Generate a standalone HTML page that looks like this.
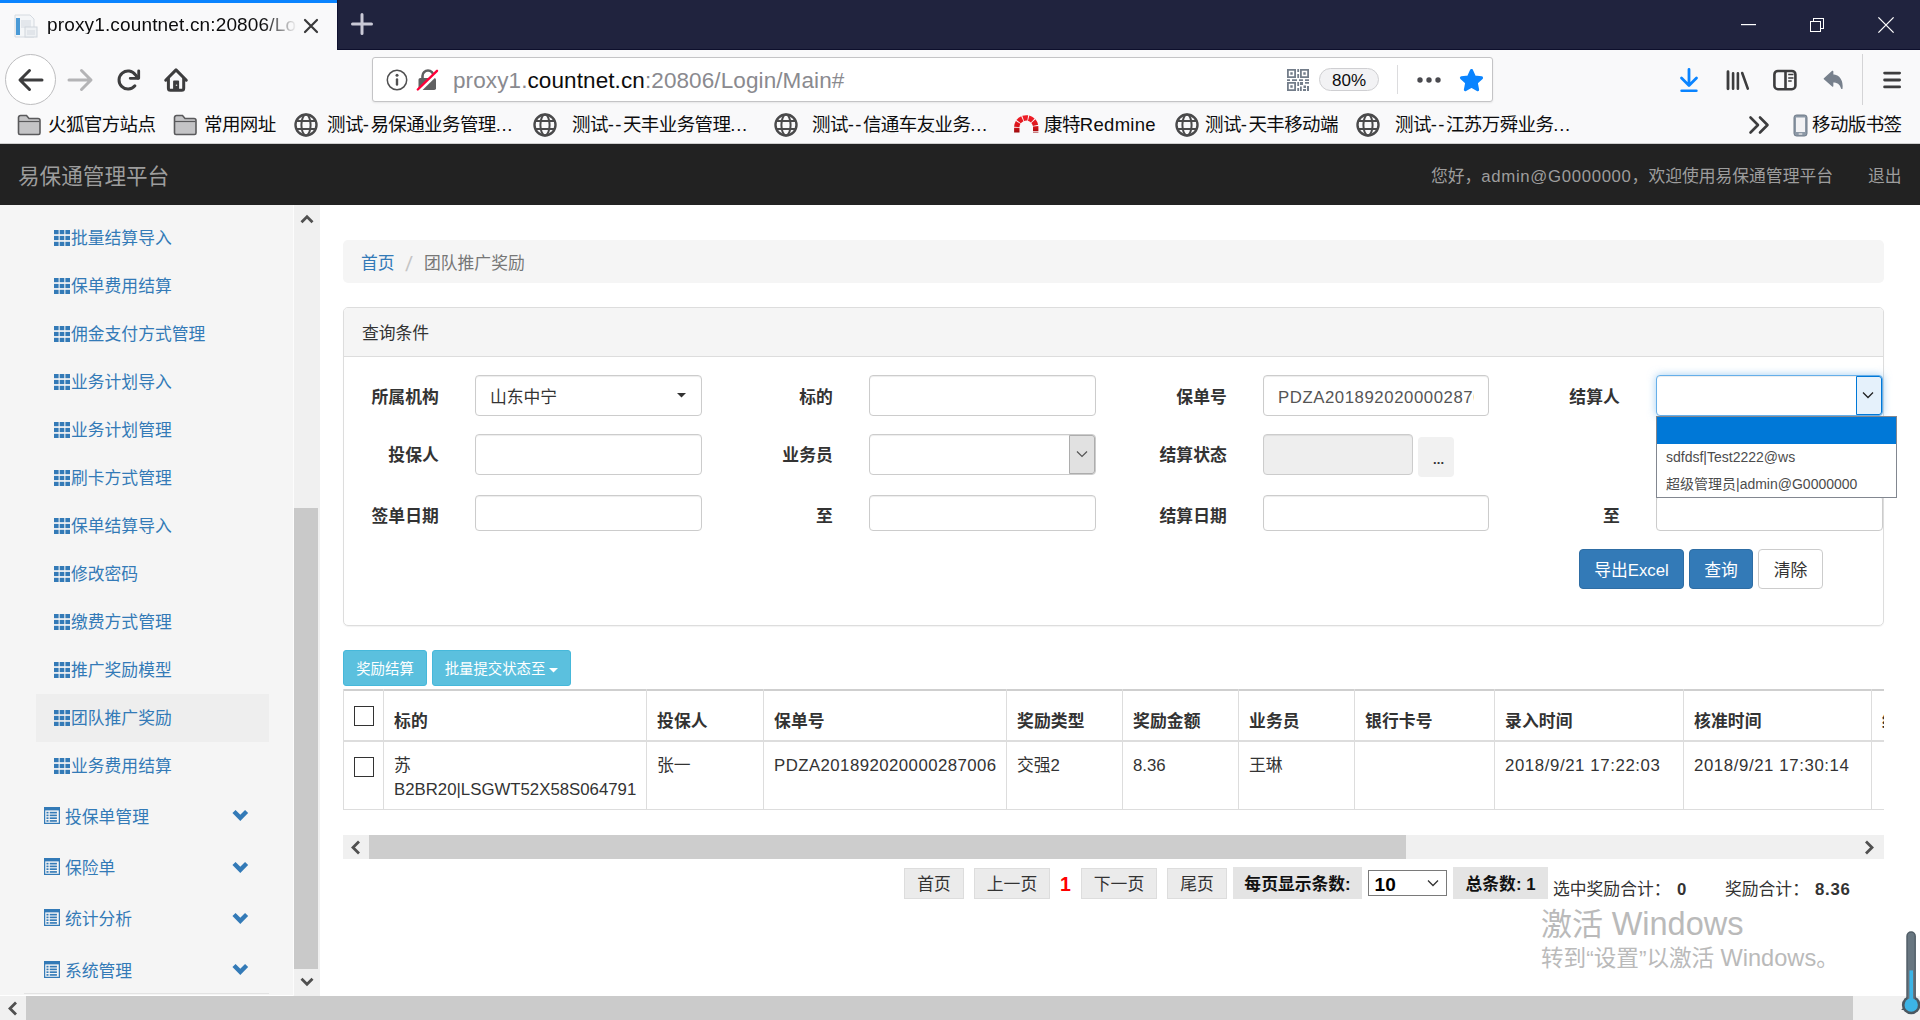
<!DOCTYPE html>
<html lang="zh-CN">
<head>
<meta charset="utf-8">
<title>易保通管理平台</title>
<style>
*{box-sizing:border-box;margin:0;padding:0}
html,body{width:1920px;height:1020px;overflow:hidden;background:#fff}
body{position:relative;font-family:"Liberation Sans","Noto Sans CJK SC",sans-serif;color:#333;font-size:16px}
.abs{position:absolute}
.t{position:absolute;white-space:nowrap;line-height:1;margin-top:2px}
svg{position:absolute;overflow:visible}
#titlebar{left:0;top:0;width:1920px;height:50px;background:#20233e}
#tab{left:0;top:0;width:337px;height:50px;background:#f9f9fa;border-top:3px solid #0a84ff}
#navbar{left:0;top:50px;width:1920px;height:60px;background:#f9f9fa}
#bmbar{left:0;top:110px;width:1920px;height:34px;background:#f9f9fa;border-bottom:1px solid #cfcfcf}
#urlbar{left:372px;top:57px;width:1121px;height:45px;background:#fff;border:1px solid #c4c4c6;border-radius:3px;box-shadow:0 1px 2px rgba(0,0,0,.08)}
.bm{font-size:18.500px;color:#0c0c0d;top:113.500px;letter-spacing:-0.6px}
#apphead{left:0;top:144px;width:1920px;height:61px;background:#222}
#side{left:0;top:205px;width:295px;height:790px;background:#f5f5f5}
.mi{font-size:16.800px;color:#337ab7;left:71px;letter-spacing:0}
.mg{font-size:16.800px;color:#337ab7;left:65px;letter-spacing:0}
.f{font-size:16.800px;letter-spacing:0}
.lb{font-size:16.800px;font-weight:bold;color:#333;letter-spacing:0.1px}
.in{background:#fff;border:1px solid #ccc;border-radius:4px;box-shadow:inset 0 1px 1px rgba(0,0,0,.075)}
.dd{font-size:14px;color:#4c4c4c}
.btn{border-radius:4px;font-size:16.800px;text-align:center;line-height:41px;white-space:nowrap;letter-spacing:0}
.btn.sm{font-size:14.400px;line-height:36px;border-radius:3px;letter-spacing:0}
.cb{width:20px;height:20px;background:#fff;border:1px solid #333}
.pg{background:#ebebeb;border:1px solid #ddd;font-size:16.800px;color:#333;text-align:center;line-height:32px;white-space:nowrap}
.pgl{background:#e4e4e4;font-size:16.800px;font-weight:bold;color:#111;text-align:center;line-height:35px;white-space:nowrap;letter-spacing:0}
</style>
</head>
<body>
<div id="titlebar" class="abs"></div><div class="abs" style="left:337px;top:49px;width:1583px;height:1px;background:#0d0f2c"></div><div class="abs" style="left:337px;top:0;width:1px;height:50px;background:#101231"></div><div id="tab" class="abs"></div><div id="navbar" class="abs"></div><div id="bmbar" class="abs"></div><div id="urlbar" class="abs"></div>
<svg style="left:14px;top:14px" width="24" height="24" viewBox="0 0 24 24">
  <path d="M1 1h15l4 4v18H1z" fill="#f4f6f8" stroke="#d5dae0" stroke-width="1"/>
  <rect x="2" y="4" width="4" height="17" fill="#4a9ad6"/>
  <rect x="7" y="6" width="10" height="8" fill="#e3e7ec"/>
  <rect x="11" y="13" width="12" height="10" fill="#eef1f4" stroke="#cfd5dc" stroke-width="1"/>
  <rect x="13" y="16" width="8" height="5" fill="#e1e5ea"/>
</svg>
<div class="t" id="tabtitle" style="left:47px;top:13px;font-size:19px;color:#0c0c0d;letter-spacing:0.15px;width:250px;overflow:hidden;-webkit-mask-image:linear-gradient(to right,#000 216px,transparent 250px);mask-image:linear-gradient(to right,#000 216px,transparent 250px)">proxy1.countnet.cn:20806/Login/Main</div>
<svg style="left:304px;top:19px" width="14" height="14" viewBox="0 0 14 14"><path d="M1 1L13 13M13 1L1 13" stroke="#3a3a3b" stroke-width="2.200" stroke-linecap="round"/></svg>
<svg style="left:351px;top:13px" width="22" height="22" viewBox="0 0 22 22"><path d="M11 1.500V20.500M1.500 11H20.500" stroke="#c9c9d6" stroke-width="3" stroke-linecap="round"/></svg>
<svg style="left:1741px;top:24px" width="16" height="2"><rect width="15" height="1.200" fill="#fff"/></svg>
<svg style="left:1809px;top:17px" width="16" height="16" viewBox="0 0 16 16" fill="none" stroke="#fff" stroke-width="1.100" shape-rendering="crispEdges"><rect x="1.500" y="4.500" width="10" height="10"/><path d="M4.500 4.500V1.500H14.500V11.500H11.500"/></svg>
<svg style="left:1878px;top:17px" width="16" height="16" viewBox="0 0 16 16"><path d="M0.400 0.400L15.600 15.600M15.600 0.400L0.400 15.600" stroke="#fff" stroke-width="1.300"/></svg>
<div class="abs" style="left:5px;top:54px;width:51px;height:51px;border-radius:50%;background:#fff;border:1px solid #bdbdbf"></div>
<svg style="left:17px;top:67px" width="28" height="26" viewBox="0 0 28 26" fill="none" stroke="#3d3d3e" stroke-width="3" stroke-linecap="round" stroke-linejoin="round"><path d="M25 13H3.500M12.500 3.500L3 13l9.500 9.500"/></svg>
<svg style="left:66px;top:67px" width="28" height="26" viewBox="0 0 28 26" fill="none" stroke="#b4b4b6" stroke-width="3" stroke-linecap="round" stroke-linejoin="round"><path d="M3 13h21.500M15.500 3.500L25 13l-9.500 9.500"/></svg>
<svg style="left:116px;top:67px" width="26" height="26" viewBox="0 0 26 26" fill="none" stroke="#3d3d3e" stroke-width="3" stroke-linecap="round" stroke-linejoin="round"><path d="M18.900 18.800A9 9 0 1 1 19.400 7.800L22 11"/><path d="M22.700 3.800V11.300H14.200" stroke-width="2.800"/></svg>
<svg style="left:163px;top:67px" width="26" height="26" viewBox="0 0 26 26" fill="none" stroke="#3d3d3e" stroke-width="3" stroke-linecap="round" stroke-linejoin="round"><path d="M2.700 13.200L13 2.900l10.300 10.300"/><path d="M5.400 11.500V21.200a2 2 0 0 0 2 2h11.300a2 2 0 0 0 2-2V11.500"/><path d="M11 22.500V14.300h4.200v8.200z" fill="#3d3d3e" stroke-width="1.800"/><circle cx="13.500" cy="18.200" r="0.800" fill="#d8d8d8" stroke="none"/></svg>
<svg style="left:386px;top:69px" width="22" height="22" viewBox="0 0 22 22"><circle cx="11" cy="11" r="9.700" fill="none" stroke="#505051" stroke-width="1.500"/><circle cx="11" cy="6.300" r="1.500" fill="#505051"/><rect x="9.800" y="9.200" width="2.400" height="7.600" rx="1.200" fill="#505051"/></svg>
<svg style="left:416px;top:68px" width="24" height="24" viewBox="0 0 24 24"><path d="M6.500 10.500V8a5.500 5.500 0 0 1 11 0v2.500" fill="none" stroke="#606061" stroke-width="2.600"/><rect x="2.500" y="10" width="17.500" height="12" rx="1.800" fill="#606061"/><path d="M2.300 23.800L23 3.600" stroke="#fff" stroke-width="3.400"/><path d="M1.800 21.500L21 2.800" stroke="#ff0039" stroke-width="2.400" stroke-linecap="round"/></svg>
<div class="t" id="url" style="left:453px;top:68px;font-size:22.500px;color:#8a8a8f;letter-spacing:0.1px">proxy1.<span style="color:#0c0c0d">countnet.cn</span>:20806/Login/Main#</div>
<svg style="left:1287px;top:69px" width="22" height="22" viewBox="0 0 22 22" fill="#737d8a"><path d="M0 0h9v9H0zM1.800 1.800v5.400h5.400V1.800zM3.300 3.300h2.400v2.400H3.300zM13 0h9v9h-9zm1.800 1.800v5.400h5.400V1.800zm1.500 1.500h2.400v2.400h-2.400zM0 13h9v9H0zm1.800 1.800v5.400h5.400v-5.400zm1.500 1.500h2.400v2.400H3.300zM10.300 0h1.800v3h-1.800zM10.300 5h1.800v4h-1.800zM0 10.300h3v1.800H0zM5 10.300h5v1.800H5zM12 10.300h4v1.800h-4zM18 10.300h4v1.800h-4zM10.300 13h1.800v4h-1.800zM13 13h3v3h-3zM18 13h4v1.800h-4zM13 17.500h1.800V22H13zM16.500 16.500h2.500v2.500h-2.500zM20 17h2v5h-2zM16 20h3v2h-3zM10.300 19h1.800v3h-1.800z"/></svg>
<div class="abs" style="left:1319px;top:68px;width:60px;height:23px;border-radius:12px;background:#f2f2f4;border:1px solid #cfcfd2"></div>
<div class="t" id="zoom80" style="left:1332px;top:70px;font-size:17px;color:#0c0c0d">80%</div>
<div class="abs" style="left:1397px;top:65px;width:1px;height:29px;background:#dcdcde"></div>
<svg style="left:1416px;top:76px" width="26" height="8"><circle cx="4" cy="4" r="2.700" fill="#4a4a4f"/><circle cx="13" cy="4" r="2.700" fill="#4a4a4f"/><circle cx="22" cy="4" r="2.700" fill="#4a4a4f"/></svg>
<svg style="left:1458.500px;top:67.500px" width="25" height="24" viewBox="0 0 28 27"><path d="M14 2.800l3.300 7.300 8 .9-5.900 5.500 1.500 7.900L14 20.400 7.100 24.400 8.600 16.500l-5.900-5.500 8-.9z" fill="#0a84ff" stroke="#0a84ff" stroke-width="3.400" stroke-linejoin="round"/></svg>
<svg style="left:1677px;top:67px" width="24" height="26" viewBox="0 0 24 26" fill="none" stroke="#0a84ff" stroke-width="2.800" stroke-linecap="round" stroke-linejoin="round"><path d="M12 2.500V18M4.500 11L12 18.500 19.500 11"/><path d="M4.600 23.800h14.800" stroke-width="2.600"/></svg>
<svg style="left:1725px;top:68px" width="26" height="24" viewBox="0 0 26 24" fill="none" stroke="#3d3d3e" stroke-width="2.800" stroke-linecap="round"><path d="M3 3.700V20.800"/><path d="M8.100 5.300V20.800M12.900 5.300V20.800M17.200 5L22.800 20.600" stroke-width="2.600"/></svg>
<svg style="left:1772px;top:69px" width="26" height="22" viewBox="0 0 26 22" fill="none" stroke="#3d3d3e" stroke-width="2.600"><rect x="2.400" y="2" width="21" height="18.200" rx="3.500"/><path d="M13.500 2v18"/><path d="M16.200 5.600h5.300M16.200 8.900h5.300M16.200 12h3.500" stroke-width="1.500"/></svg>
<svg style="left:1823px;top:68.500px" width="22" height="24" viewBox="0 0 24 26"><path d="M10.500 2.500L1.500 10.500l9 8v-5c5 0 8.500 2 10 7.500.800-8-2.500-14-10-14.500z" fill="#77808c" stroke="#77808c" stroke-width="1.600" stroke-linejoin="round"/></svg>
<div class="abs" style="left:1862px;top:54px;width:1px;height:51px;background:#d4d4d6"></div>
<svg style="left:1882px;top:70px" width="20" height="20" viewBox="0 0 20 20" stroke="#3d3d3e" stroke-width="2.800" stroke-linecap="round"><path d="M2.600 3.100h15M2.600 10h15M2.600 16.900h15"/></svg>
<svg style="left:17.4px;top:114px" width="24" height="22" viewBox="0 0 24 22"><path d="M1.500 3.500a2 2 0 0 1 2-2h6l2.500 3h9a2 2 0 0 1 2 2V19a1.500 1.500 0 0 1-1.500 1.500h-18.500A1.500 1.500 0 0 1 1.500 19z" fill="#c4c4c6" stroke="#5a5a5c" stroke-width="1.600"/><path d="M1.500 7.500h21" stroke="#5a5a5c" stroke-width="1.200"/></svg>
<div class="t bm" style="left:48px">火狐官方站点</div>
<svg style="left:173.4px;top:114px" width="24" height="22" viewBox="0 0 24 22"><path d="M1.500 3.500a2 2 0 0 1 2-2h6l2.500 3h9a2 2 0 0 1 2 2V19a1.500 1.500 0 0 1-1.500 1.500h-18.500A1.500 1.500 0 0 1 1.500 19z" fill="#c4c4c6" stroke="#5a5a5c" stroke-width="1.600"/><path d="M1.500 7.500h21" stroke="#5a5a5c" stroke-width="1.200"/></svg>
<div class="t bm" style="left:204px">常用网址</div>
<svg style="left:294px;top:113px" width="24" height="24" viewBox="0 0 24 24" fill="none" stroke="#4a4a4b" stroke-width="2"><circle cx="12" cy="12" r="10.500" stroke-width="2.400"/><ellipse cx="12" cy="12" rx="4.600" ry="10.500"/><path d="M2.500 8h19M2.500 16h19" stroke-width="1.800"/></svg>
<div class="t bm" style="left:327px">测试<span style="letter-spacing:1.4px">-</span>易保通业务管理<span style="letter-spacing:0.7px">...</span></div>
<svg style="left:533px;top:113px" width="24" height="24" viewBox="0 0 24 24" fill="none" stroke="#4a4a4b" stroke-width="2"><circle cx="12" cy="12" r="10.500" stroke-width="2.400"/><ellipse cx="12" cy="12" rx="4.600" ry="10.500"/><path d="M2.500 8h19M2.500 16h19" stroke-width="1.800"/></svg>
<div class="t bm" style="left:572px">测试<span style="letter-spacing:1.4px">--</span>天丰业务管理<span style="letter-spacing:0.7px">...</span></div>
<svg style="left:774px;top:113px" width="24" height="24" viewBox="0 0 24 24" fill="none" stroke="#4a4a4b" stroke-width="2"><circle cx="12" cy="12" r="10.500" stroke-width="2.400"/><ellipse cx="12" cy="12" rx="4.600" ry="10.500"/><path d="M2.500 8h19M2.500 16h19" stroke-width="1.800"/></svg>
<div class="t bm" style="left:812px">测试<span style="letter-spacing:1.4px">--</span>信通车友业务<span style="letter-spacing:0.7px">...</span></div>
<svg style="left:1014px;top:115px" width="25" height="18" viewBox="0 0 25 18" fill="none"><defs><linearGradient id="rg" x1="0" y1="0" x2="0" y2="1"><stop offset="0" stop-color="#ee1c25"/><stop offset="0.6" stop-color="#d8141a"/><stop offset="1" stop-color="#9a0a0c"/></linearGradient></defs><path d="M2.800 17.500V12.300A9.450 9.450 0 0 1 21.700 12.300V17.500" stroke="url(#rg)" stroke-width="5.400" stroke-dasharray="4.700 0.900"/></svg>
<div class="t bm" style="left:1044px">康特<span style="letter-spacing:0.3px">Redmine</span></div>
<svg style="left:1175px;top:113px" width="24" height="24" viewBox="0 0 24 24" fill="none" stroke="#4a4a4b" stroke-width="2"><circle cx="12" cy="12" r="10.500" stroke-width="2.400"/><ellipse cx="12" cy="12" rx="4.600" ry="10.500"/><path d="M2.500 8h19M2.500 16h19" stroke-width="1.800"/></svg>
<div class="t bm" style="left:1205px">测试<span style="letter-spacing:1.4px">-</span>天丰移动端</div>
<svg style="left:1356px;top:113px" width="24" height="24" viewBox="0 0 24 24" fill="none" stroke="#4a4a4b" stroke-width="2"><circle cx="12" cy="12" r="10.500" stroke-width="2.400"/><ellipse cx="12" cy="12" rx="4.600" ry="10.500"/><path d="M2.500 8h19M2.500 16h19" stroke-width="1.800"/></svg>
<div class="t bm" style="left:1395px">测试<span style="letter-spacing:1.4px">--</span>江苏万舜业务<span style="letter-spacing:0.7px">...</span></div>
<svg style="left:1748px;top:115px" width="22" height="20" viewBox="0 0 22 20" fill="none" stroke="#3d3d3e" stroke-width="2.600" stroke-linecap="round" stroke-linejoin="round"><path d="M2.500 2.500L10 10l-7.500 7.500M12 2.500L19.500 10 12 17.500"/></svg>
<svg style="left:1793px;top:114px" width="15" height="23" viewBox="0 0 15 23"><rect x="1" y="1" width="13" height="21" rx="2.500" fill="#8d99a6" stroke="#6f7b88" stroke-width="1"/><rect x="3" y="3.500" width="9" height="14.500" fill="#f2f2f4"/><rect x="5.500" y="19.300" width="4" height="1.500" rx=".7" fill="#dcdcde"/></svg>
<div class="t bm" style="left:1812px">移动版书签</div>
<div id="apphead" class="abs"></div><div id="side" class="abs"></div>
<div class="t" id="brand" style="left:18px;top:163.500px;font-size:21.600px;color:#9d9d9d">易保通管理平台</div>
<div class="t" id="hello" style="left:1431px;top:167px;font-size:16.800px;color:#9d9d9d">您好，<span style="letter-spacing:0.65px">admin@G0000000</span>，欢迎使用易保通管理平台</div>
<div class="t" id="logout" style="left:1868px;top:167px;font-size:16.800px;color:#9d9d9d">退出</div>
<div class="abs" style="left:36px;top:694px;width:233px;height:48px;background:#eee"></div>
<svg style="left:54px;top:230px" width="17" height="17" fill="#337ab7"><rect x="0.0" y="0.0" width="4.600" height="4.200"/><rect x="5.7" y="0.0" width="4.600" height="4.200"/><rect x="11.4" y="0.0" width="4.600" height="4.200"/><rect x="0.0" y="5.9" width="4.600" height="4.200"/><rect x="5.7" y="5.9" width="4.600" height="4.200"/><rect x="11.4" y="5.9" width="4.600" height="4.200"/><rect x="0.0" y="11.8" width="4.600" height="4.200"/><rect x="5.7" y="11.8" width="4.600" height="4.200"/><rect x="11.4" y="11.8" width="4.600" height="4.200"/></svg>
<div class="t mi" style="top:229px">批量结算导入</div>
<svg style="left:54px;top:278px" width="17" height="17" fill="#337ab7"><rect x="0.0" y="0.0" width="4.600" height="4.200"/><rect x="5.7" y="0.0" width="4.600" height="4.200"/><rect x="11.4" y="0.0" width="4.600" height="4.200"/><rect x="0.0" y="5.9" width="4.600" height="4.200"/><rect x="5.7" y="5.9" width="4.600" height="4.200"/><rect x="11.4" y="5.9" width="4.600" height="4.200"/><rect x="0.0" y="11.8" width="4.600" height="4.200"/><rect x="5.7" y="11.8" width="4.600" height="4.200"/><rect x="11.4" y="11.8" width="4.600" height="4.200"/></svg>
<div class="t mi" style="top:277px">保单费用结算</div>
<svg style="left:54px;top:326px" width="17" height="17" fill="#337ab7"><rect x="0.0" y="0.0" width="4.600" height="4.200"/><rect x="5.7" y="0.0" width="4.600" height="4.200"/><rect x="11.4" y="0.0" width="4.600" height="4.200"/><rect x="0.0" y="5.9" width="4.600" height="4.200"/><rect x="5.7" y="5.9" width="4.600" height="4.200"/><rect x="11.4" y="5.9" width="4.600" height="4.200"/><rect x="0.0" y="11.8" width="4.600" height="4.200"/><rect x="5.7" y="11.8" width="4.600" height="4.200"/><rect x="11.4" y="11.8" width="4.600" height="4.200"/></svg>
<div class="t mi" style="top:325px">佣金支付方式管理</div>
<svg style="left:54px;top:374px" width="17" height="17" fill="#337ab7"><rect x="0.0" y="0.0" width="4.600" height="4.200"/><rect x="5.7" y="0.0" width="4.600" height="4.200"/><rect x="11.4" y="0.0" width="4.600" height="4.200"/><rect x="0.0" y="5.9" width="4.600" height="4.200"/><rect x="5.7" y="5.9" width="4.600" height="4.200"/><rect x="11.4" y="5.9" width="4.600" height="4.200"/><rect x="0.0" y="11.8" width="4.600" height="4.200"/><rect x="5.7" y="11.8" width="4.600" height="4.200"/><rect x="11.4" y="11.8" width="4.600" height="4.200"/></svg>
<div class="t mi" style="top:373px">业务计划导入</div>
<svg style="left:54px;top:422px" width="17" height="17" fill="#337ab7"><rect x="0.0" y="0.0" width="4.600" height="4.200"/><rect x="5.7" y="0.0" width="4.600" height="4.200"/><rect x="11.4" y="0.0" width="4.600" height="4.200"/><rect x="0.0" y="5.9" width="4.600" height="4.200"/><rect x="5.7" y="5.9" width="4.600" height="4.200"/><rect x="11.4" y="5.9" width="4.600" height="4.200"/><rect x="0.0" y="11.8" width="4.600" height="4.200"/><rect x="5.7" y="11.8" width="4.600" height="4.200"/><rect x="11.4" y="11.8" width="4.600" height="4.200"/></svg>
<div class="t mi" style="top:421px">业务计划管理</div>
<svg style="left:54px;top:470px" width="17" height="17" fill="#337ab7"><rect x="0.0" y="0.0" width="4.600" height="4.200"/><rect x="5.7" y="0.0" width="4.600" height="4.200"/><rect x="11.4" y="0.0" width="4.600" height="4.200"/><rect x="0.0" y="5.9" width="4.600" height="4.200"/><rect x="5.7" y="5.9" width="4.600" height="4.200"/><rect x="11.4" y="5.9" width="4.600" height="4.200"/><rect x="0.0" y="11.8" width="4.600" height="4.200"/><rect x="5.7" y="11.8" width="4.600" height="4.200"/><rect x="11.4" y="11.8" width="4.600" height="4.200"/></svg>
<div class="t mi" style="top:469px">刷卡方式管理</div>
<svg style="left:54px;top:518px" width="17" height="17" fill="#337ab7"><rect x="0.0" y="0.0" width="4.600" height="4.200"/><rect x="5.7" y="0.0" width="4.600" height="4.200"/><rect x="11.4" y="0.0" width="4.600" height="4.200"/><rect x="0.0" y="5.9" width="4.600" height="4.200"/><rect x="5.7" y="5.9" width="4.600" height="4.200"/><rect x="11.4" y="5.9" width="4.600" height="4.200"/><rect x="0.0" y="11.8" width="4.600" height="4.200"/><rect x="5.7" y="11.8" width="4.600" height="4.200"/><rect x="11.4" y="11.8" width="4.600" height="4.200"/></svg>
<div class="t mi" style="top:517px">保单结算导入</div>
<svg style="left:54px;top:566px" width="17" height="17" fill="#337ab7"><rect x="0.0" y="0.0" width="4.600" height="4.200"/><rect x="5.7" y="0.0" width="4.600" height="4.200"/><rect x="11.4" y="0.0" width="4.600" height="4.200"/><rect x="0.0" y="5.9" width="4.600" height="4.200"/><rect x="5.7" y="5.9" width="4.600" height="4.200"/><rect x="11.4" y="5.9" width="4.600" height="4.200"/><rect x="0.0" y="11.8" width="4.600" height="4.200"/><rect x="5.7" y="11.8" width="4.600" height="4.200"/><rect x="11.4" y="11.8" width="4.600" height="4.200"/></svg>
<div class="t mi" style="top:565px">修改密码</div>
<svg style="left:54px;top:614px" width="17" height="17" fill="#337ab7"><rect x="0.0" y="0.0" width="4.600" height="4.200"/><rect x="5.7" y="0.0" width="4.600" height="4.200"/><rect x="11.4" y="0.0" width="4.600" height="4.200"/><rect x="0.0" y="5.9" width="4.600" height="4.200"/><rect x="5.7" y="5.9" width="4.600" height="4.200"/><rect x="11.4" y="5.9" width="4.600" height="4.200"/><rect x="0.0" y="11.8" width="4.600" height="4.200"/><rect x="5.7" y="11.8" width="4.600" height="4.200"/><rect x="11.4" y="11.8" width="4.600" height="4.200"/></svg>
<div class="t mi" style="top:613px">缴费方式管理</div>
<svg style="left:54px;top:662px" width="17" height="17" fill="#337ab7"><rect x="0.0" y="0.0" width="4.600" height="4.200"/><rect x="5.7" y="0.0" width="4.600" height="4.200"/><rect x="11.4" y="0.0" width="4.600" height="4.200"/><rect x="0.0" y="5.9" width="4.600" height="4.200"/><rect x="5.7" y="5.9" width="4.600" height="4.200"/><rect x="11.4" y="5.9" width="4.600" height="4.200"/><rect x="0.0" y="11.8" width="4.600" height="4.200"/><rect x="5.7" y="11.8" width="4.600" height="4.200"/><rect x="11.4" y="11.8" width="4.600" height="4.200"/></svg>
<div class="t mi" style="top:661px">推广奖励模型</div>
<svg style="left:54px;top:710px" width="17" height="17" fill="#337ab7"><rect x="0.0" y="0.0" width="4.600" height="4.200"/><rect x="5.7" y="0.0" width="4.600" height="4.200"/><rect x="11.4" y="0.0" width="4.600" height="4.200"/><rect x="0.0" y="5.9" width="4.600" height="4.200"/><rect x="5.7" y="5.9" width="4.600" height="4.200"/><rect x="11.4" y="5.9" width="4.600" height="4.200"/><rect x="0.0" y="11.8" width="4.600" height="4.200"/><rect x="5.7" y="11.8" width="4.600" height="4.200"/><rect x="11.4" y="11.8" width="4.600" height="4.200"/></svg>
<div class="t mi" style="top:709px">团队推广奖励</div>
<svg style="left:54px;top:758px" width="17" height="17" fill="#337ab7"><rect x="0.0" y="0.0" width="4.600" height="4.200"/><rect x="5.7" y="0.0" width="4.600" height="4.200"/><rect x="11.4" y="0.0" width="4.600" height="4.200"/><rect x="0.0" y="5.9" width="4.600" height="4.200"/><rect x="5.7" y="5.9" width="4.600" height="4.200"/><rect x="11.4" y="5.9" width="4.600" height="4.200"/><rect x="0.0" y="11.8" width="4.600" height="4.200"/><rect x="5.7" y="11.8" width="4.600" height="4.200"/><rect x="11.4" y="11.8" width="4.600" height="4.200"/></svg>
<div class="t mi" style="top:757px">业务费用结算</div>
<svg style="left:44.4px;top:807px" width="16" height="17" viewBox="0 0 15.600 16.600" fill="#337ab7"><rect x="0" y="0" width="15.600" height="3.300"/><rect x="0.600" y="0.600" width="14.400" height="15.400" fill="none" stroke="#337ab7" stroke-width="1.200"/><rect x="2.400" y="4.7" width="2" height="1.600"/><rect x="5.600" y="4.7" width="7" height="1.600"/><rect x="2.400" y="7.4" width="2" height="1.600"/><rect x="5.600" y="7.4" width="7" height="1.600"/><rect x="2.400" y="10.1" width="2" height="1.600"/><rect x="5.600" y="10.1" width="7" height="1.600"/><rect x="2.400" y="12.8" width="2" height="1.600"/><rect x="5.600" y="12.8" width="7" height="1.600"/></svg>
<div class="t mg" style="top:808px">投保单管理</div>
<svg style="left:232px;top:809.4px" width="17" height="12" viewBox="0 0 17 12"><path d="M2 2.500l6.300 6.300L14.600 2.500" fill="none" stroke="#337ab7" stroke-width="4.400"/></svg>
<svg style="left:44.4px;top:858.2px" width="16" height="17" viewBox="0 0 15.600 16.600" fill="#337ab7"><rect x="0" y="0" width="15.600" height="3.300"/><rect x="0.600" y="0.600" width="14.400" height="15.400" fill="none" stroke="#337ab7" stroke-width="1.200"/><rect x="2.400" y="4.7" width="2" height="1.600"/><rect x="5.600" y="4.7" width="7" height="1.600"/><rect x="2.400" y="7.4" width="2" height="1.600"/><rect x="5.600" y="7.4" width="7" height="1.600"/><rect x="2.400" y="10.1" width="2" height="1.600"/><rect x="5.600" y="10.1" width="7" height="1.600"/><rect x="2.400" y="12.8" width="2" height="1.600"/><rect x="5.600" y="12.8" width="7" height="1.600"/></svg>
<div class="t mg" style="top:859.2px">保险单</div>
<svg style="left:232px;top:860.6px" width="17" height="12" viewBox="0 0 17 12"><path d="M2 2.500l6.300 6.300L14.600 2.500" fill="none" stroke="#337ab7" stroke-width="4.400"/></svg>
<svg style="left:44.4px;top:909.4px" width="16" height="17" viewBox="0 0 15.600 16.600" fill="#337ab7"><rect x="0" y="0" width="15.600" height="3.300"/><rect x="0.600" y="0.600" width="14.400" height="15.400" fill="none" stroke="#337ab7" stroke-width="1.200"/><rect x="2.400" y="4.7" width="2" height="1.600"/><rect x="5.600" y="4.7" width="7" height="1.600"/><rect x="2.400" y="7.4" width="2" height="1.600"/><rect x="5.600" y="7.4" width="7" height="1.600"/><rect x="2.400" y="10.1" width="2" height="1.600"/><rect x="5.600" y="10.1" width="7" height="1.600"/><rect x="2.400" y="12.8" width="2" height="1.600"/><rect x="5.600" y="12.8" width="7" height="1.600"/></svg>
<div class="t mg" style="top:910.4px">统计分析</div>
<svg style="left:232px;top:911.8px" width="17" height="12" viewBox="0 0 17 12"><path d="M2 2.500l6.300 6.300L14.600 2.500" fill="none" stroke="#337ab7" stroke-width="4.400"/></svg>
<svg style="left:44.4px;top:960.6px" width="16" height="17" viewBox="0 0 15.600 16.600" fill="#337ab7"><rect x="0" y="0" width="15.600" height="3.300"/><rect x="0.600" y="0.600" width="14.400" height="15.400" fill="none" stroke="#337ab7" stroke-width="1.200"/><rect x="2.400" y="4.7" width="2" height="1.600"/><rect x="5.600" y="4.7" width="7" height="1.600"/><rect x="2.400" y="7.4" width="2" height="1.600"/><rect x="5.600" y="7.4" width="7" height="1.600"/><rect x="2.400" y="10.1" width="2" height="1.600"/><rect x="5.600" y="10.1" width="7" height="1.600"/><rect x="2.400" y="12.8" width="2" height="1.600"/><rect x="5.600" y="12.8" width="7" height="1.600"/></svg>
<div class="t mg" style="top:961.6px">系统管理</div>
<svg style="left:232px;top:963.0px" width="17" height="12" viewBox="0 0 17 12"><path d="M2 2.500l6.300 6.300L14.600 2.500" fill="none" stroke="#337ab7" stroke-width="4.400"/></svg>
<div class="abs" style="left:24px;top:993px;width:245px;height:1px;background:#e3e3e3"></div>
<div class="abs" style="left:294px;top:205px;width:26px;height:791px;background:#f0f0f0"></div>
<div class="abs" style="left:294px;top:508px;width:24px;height:461px;background:#c9c9c9"></div>
<div class="abs" style="left:293px;top:205px;width:1px;height:791px;background:#fcfcfc"></div>
<svg style="left:299.500px;top:214px" width="14" height="10" viewBox="0 0 14 10"><path d="M1.500 8.300L7 2.800 12.500 8.300" fill="none" stroke="#505050" stroke-width="2.800"/></svg>
<svg style="left:299.500px;top:977px" width="14" height="10" viewBox="0 0 14 10"><path d="M1.500 1.800L7 7.300 12.500 1.800" fill="none" stroke="#505050" stroke-width="2.800"/></svg>
<div class="abs" style="left:0;top:996px;width:1920px;height:24px;background:#f0f0f0"></div>
<div class="abs" style="left:26px;top:996px;width:1827px;height:24px;background:#cbcbcb"></div>
<svg style="left:7px;top:1001px" width="11" height="15" viewBox="0 0 11 15"><path d="M9 1.500L3 7.500 9 13.500" fill="none" stroke="#505050" stroke-width="2.800"/></svg>
<div class="abs" style="left:343px;top:240px;width:1541px;height:43px;background:#f5f5f5;border-radius:5px"></div>
<div class="t f" style="left:361px;top:254px;color:#337ab7">首页</div>
<div class="t" style="left:405.500px;top:252px;color:#c4c4c4;font-size:20.800px;transform:skewX(-6deg)">/</div>
<div class="t f" id="bc2" style="left:424px;top:254px;color:#777">团队推广奖励</div>
<div class="abs" style="left:343px;top:307px;width:1541px;height:319px;border:1px solid #ddd;border-radius:5px;box-shadow:0 1px 1px rgba(0,0,0,.05)"></div>
<div class="abs" style="left:344px;top:308px;width:1539px;height:49px;background:#f5f5f5;border-bottom:1px solid #ddd;border-radius:4px 4px 0 0"></div>
<div class="t f" style="left:362px;top:324px;color:#333">查询条件</div>
<div class="t lb" style="right:1481px;top:388px">所属机构</div>
<div class="t lb" style="right:1481px;top:446px">投保人</div>
<div class="t lb" style="right:1481px;top:507px">签单日期</div>
<div class="t lb" style="right:1087px;top:388px">标的</div>
<div class="t lb" style="right:1087px;top:446px">业务员</div>
<div class="t lb" style="right:1087px;top:507px">至</div>
<div class="t lb" style="right:693px;top:388px">保单号</div>
<div class="t lb" style="right:693px;top:446px">结算状态</div>
<div class="t lb" style="right:693px;top:507px">结算日期</div>
<div class="t lb" style="right:300px;top:388px">结算人</div>
<div class="t lb" style="right:300px;top:507px">至</div>
<div class="abs in" style="left:475px;top:375px;width:227px;height:41px;"></div>
<div class="abs in" style="left:475px;top:434px;width:227px;height:41px;"></div>
<div class="abs in" style="left:475px;top:495px;width:227px;height:36px;"></div>
<div class="abs in" style="left:869px;top:375px;width:227px;height:41px;"></div>
<div class="abs in" style="left:869px;top:434px;width:227px;height:41px;"></div>
<div class="abs in" style="left:869px;top:495px;width:227px;height:36px;"></div>
<div class="abs in" style="left:1263px;top:375px;width:226px;height:41px;"></div>
<div class="abs in" style="left:1263px;top:495px;width:226px;height:36px;"></div>
<div class="abs in" style="left:1656px;top:495px;width:227px;height:36px;"></div>
<div class="t f" style="left:490px;top:388px;color:#333">山东中宁</div>
<svg style="left:677px;top:393px" width="9" height="5"><path d="M0 0h9L4.500 4.500z" fill="#333"/></svg>
<div class="abs" style="left:1069px;top:435px;width:26px;height:39px;background:#e1e1e1;border:1px solid #adadad;border-radius:0 3px 3px 0"></div>
<svg style="left:1075.500px;top:450px" width="12" height="8" viewBox="0 0 12 8"><path d="M1 1.500l5 5 5-5" fill="none" stroke="#555" stroke-width="1.200"/></svg>
<div class="t f" id="pdza" style="left:1278px;top:388px;color:#555;width:196px;overflow:hidden;letter-spacing:0.55px">PDZA201892020000287006</div>
<div class="abs in" style="left:1263px;top:434px;width:150px;height:41px;background:#eee"></div>
<div class="abs" style="left:1418px;top:437px;width:36px;height:40px;background:#f1f1f1;border-radius:4px"></div>
<div class="t" style="left:1433px;top:451px;font-size:13px;color:#333;font-weight:bold;letter-spacing:0.200px">...</div>
<div class="abs" style="left:1656px;top:375px;width:227px;height:41px;background:#fff;border:1px solid #66afe9;border-radius:4px;box-shadow:inset 0 1px 1px rgba(0,0,0,.075),0 0 8px rgba(102,175,233,.6)"></div>
<div class="abs" style="left:1856px;top:376px;width:26px;height:39px;background:#e5f1fb;border:1px solid #0078d7;border-radius:0 3px 3px 0"></div>
<svg style="left:1862px;top:391px" width="12" height="8" viewBox="0 0 12 8"><path d="M1 1.500l5 5 5-5" fill="none" stroke="#222" stroke-width="1.300"/></svg>
<div class="abs" style="left:1656px;top:416px;width:241px;height:82px;background:#fff;border:1px solid #828790"></div>
<div class="abs" style="left:1657px;top:417px;width:239px;height:27px;background:#0078d7"></div>
<div class="t dd" id="dd1" style="left:1666px;top:448px">sdfdsf|Test2222@ws</div>
<div class="t dd" id="dd2" style="left:1666px;top:475px">超级管理员|admin@G0000000</div>
<div class="abs btn" style="left:1579px;top:549px;width:105px;height:40px;background:#337ab7;border:1px solid #2e6da4;color:#fff">导出Excel</div>
<div class="abs btn" style="left:1689px;top:549px;width:64px;height:40px;background:#337ab7;border:1px solid #2e6da4;color:#fff">查询</div>
<div class="abs btn" style="left:1758px;top:549px;width:65px;height:40px;background:#fff;border:1px solid #ccc;color:#333">清除</div>
<div class="abs btn sm" style="left:343px;top:650px;width:84px;height:36px;background:#5bc0de;border:1px solid #46b8da;color:#fff">奖励结算</div>
<div class="abs btn sm" style="left:432px;top:650px;width:139px;height:36px;background:#5bc0de;border:1px solid #46b8da;color:#fff">批量提交状态至<svg style="position:static;margin-left:4px;vertical-align:middle" width="9" height="5"><path d="M0 0h9L4.500 4.500z" fill="#fff"/></svg></div>
<div class="abs" style="left:343px;top:689px;width:1541px;height:121px;overflow:hidden" id="tbl">
<div class="abs" style="left:0;top:0;width:1541px;height:2px;background:#cfcfcf"></div>
<div class="abs" style="left:0;top:51px;width:1541px;height:2px;background:#ddd"></div>
<div class="abs" style="left:0;top:120px;width:1541px;height:1px;background:#ddd"></div>
<div class="abs" style="left:0px;top:0;width:1px;height:121px;background:#ddd"></div>
<div class="abs" style="left:40px;top:0;width:1px;height:121px;background:#ddd"></div>
<div class="abs" style="left:303px;top:0;width:1px;height:121px;background:#ddd"></div>
<div class="abs" style="left:420px;top:0;width:1px;height:121px;background:#ddd"></div>
<div class="abs" style="left:663px;top:0;width:1px;height:121px;background:#ddd"></div>
<div class="abs" style="left:779px;top:0;width:1px;height:121px;background:#ddd"></div>
<div class="abs" style="left:895px;top:0;width:1px;height:121px;background:#ddd"></div>
<div class="abs" style="left:1011px;top:0;width:1px;height:121px;background:#ddd"></div>
<div class="abs" style="left:1151px;top:0;width:1px;height:121px;background:#ddd"></div>
<div class="abs" style="left:1340px;top:0;width:1px;height:121px;background:#ddd"></div>
<div class="abs" style="left:1528px;top:0;width:1px;height:121px;background:#ddd"></div>
<div class="t lb" style="left:51px;top:23px">标的</div>
<div class="t lb" style="left:314px;top:23px">投保人</div>
<div class="t lb" style="left:431px;top:23px">保单号</div>
<div class="t lb" style="left:674px;top:23px">奖励类型</div>
<div class="t lb" style="left:790px;top:23px">奖励金额</div>
<div class="t lb" style="left:906px;top:23px">业务员</div>
<div class="t lb" style="left:1022px;top:23px">银行卡号</div>
<div class="t lb" style="left:1162px;top:23px">录入时间</div>
<div class="t lb" style="left:1351px;top:23px">核准时间</div>
<div class="t lb" style="left:1539px;top:23px">结算时间</div>
<div class="t f" style="left:51px;top:67px;color:#333;letter-spacing:0px">苏</div>
<div class="t f" style="left:314px;top:67px;color:#333;letter-spacing:0px">张一</div>
<div class="t f" style="left:431px;top:67px;color:#333;letter-spacing:0.45px">PDZA201892020000287006</div>
<div class="t f" style="left:674px;top:67px;color:#333;letter-spacing:0px">交强2</div>
<div class="t f" style="left:790px;top:67px;color:#333;letter-spacing:0px">8.36</div>
<div class="t f" style="left:906px;top:67px;color:#333;letter-spacing:0px">王琳</div>
<div class="t f" style="left:1162px;top:67px;color:#333;letter-spacing:0.6px">2018/9/21 17:22:03</div>
<div class="t f" style="left:1351px;top:67px;color:#333;letter-spacing:0.6px">2018/9/21 17:30:14</div>
<div class="t f" id="vin" style="left:51px;top:91px;color:#333">B2BR20|LSGWT52X58S064791</div>
<div class="abs cb" style="left:11px;top:17px"></div>
<div class="abs cb" style="left:11px;top:68px"></div>
</div>
<div class="abs" style="left:343px;top:835px;width:1541px;height:24px;background:#f0f0f0"></div>
<div class="abs" style="left:369px;top:835px;width:1037px;height:24px;background:#cdcdcd"></div>
<svg style="left:350px;top:840px" width="11" height="15" viewBox="0 0 11 15"><path d="M9 1.500L3 7.500 9 13.500" fill="none" stroke="#505050" stroke-width="2.800"/></svg>
<svg style="left:1864px;top:840px" width="11" height="15" viewBox="0 0 11 15"><path d="M2 1.500L8 7.500 2 13.500" fill="none" stroke="#505050" stroke-width="2.800"/></svg>
<div class="abs pg" style="left:904px;top:868px;width:60px;height:31px">首页</div>
<div class="abs pg" style="left:974px;top:868px;width:76px;height:31px">上一页</div>
<div class="abs pg" style="left:1081px;top:868px;width:76px;height:31px">下一页</div>
<div class="abs pg" style="left:1167px;top:868px;width:60px;height:31px">尾页</div>
<div class="t" style="left:1060px;top:872.500px;font-size:19.500px;font-weight:bold;color:#f00">1</div>
<div class="abs pgl" style="left:1233px;top:867px;width:129px;height:32px">每页显示条数:</div>
<div class="abs" style="left:1368px;top:870px;width:79px;height:26px;background:#fff;border:1px solid #7a7a7a"></div>
<div class="t" style="left:1374.500px;top:872.500px;font-size:19px;font-weight:bold;color:#000;letter-spacing:0.3px">10</div>
<svg style="left:1427px;top:878.500px" width="12" height="8" viewBox="0 0 12 8"><path d="M1 1.500l5 5 5-5" fill="none" stroke="#333" stroke-width="1.300"/></svg>
<div class="abs pgl" style="left:1453px;top:867px;width:95px;height:32px">总条数: 1</div>
<div class="t f" style="left:1553px;top:880px;color:#333">选中奖励合计：</div>
<div class="t f" style="left:1677px;top:880px;color:#333;font-weight:bold">0</div>
<div class="t f" style="left:1725px;top:880px;color:#333">奖励合计：</div>
<div class="t f" style="left:1815px;top:880px;color:#333;font-weight:bold;letter-spacing:0.7px">8.36</div>
<div class="t" id="wm1" style="left:1541px;top:906px;font-size:31px;color:#bababa">激活 <span style="font-size:32.500px">Windows</span></div>
<div class="t" id="wm2" style="left:1541px;top:945px;font-size:22.600px;color:#bababa">转到“设置”以激活 <span style="font-size:23.600px">Windows</span>。</div>
<svg style="left:1900px;top:928px" width="20" height="90" viewBox="0 0 20 90"><path d="M1 82l5-4 2 4z" fill="#505050"/><rect x="6.300" y="3.300" width="9.600" height="74" rx="4.800" fill="#4b5861"/><circle cx="11.200" cy="77" r="9.300" fill="#4b5861"/><rect x="7.600" y="4.600" width="7" height="72" rx="3.500" fill="#687680"/><rect x="9.400" y="42.400" width="3.600" height="34" fill="#3cb4e6"/><circle cx="11.200" cy="77" r="6.700" fill="#3cb4e6"/></svg>
</body>
</html>
